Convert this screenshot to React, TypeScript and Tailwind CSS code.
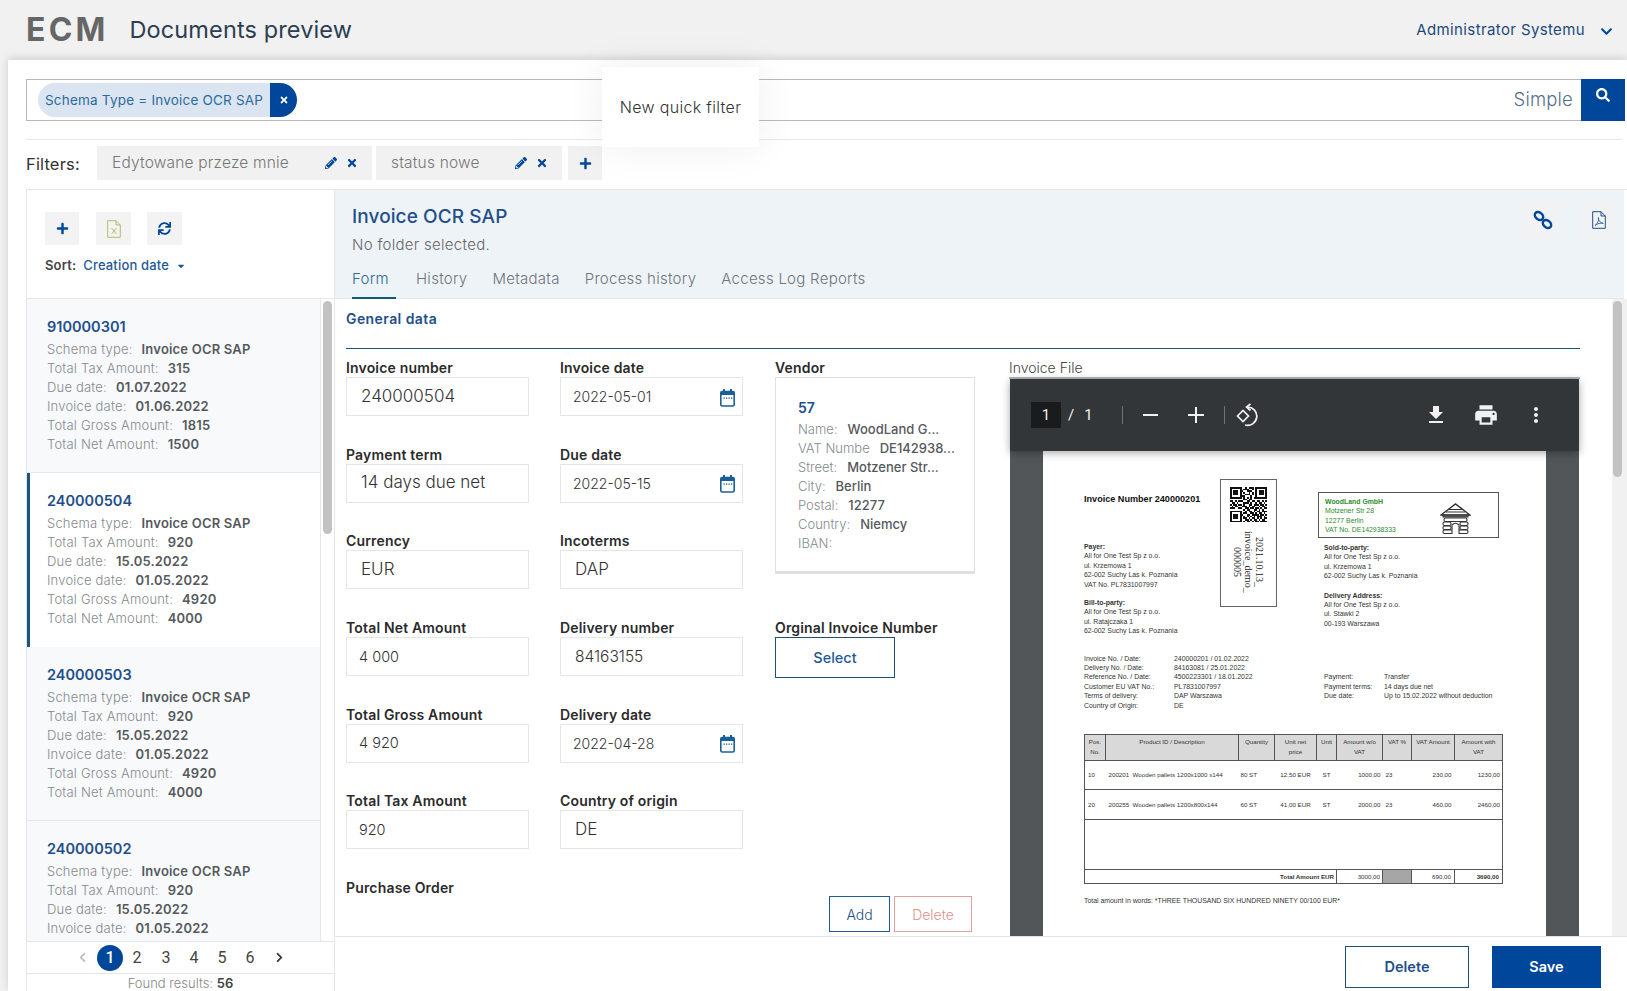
import React from "react";
import { FaPlus, FaTimes, FaSearch, FaChevronDown, FaPencilAlt, FaSync, FaChevronLeft, FaChevronRight, FaCaretDown } from "react-icons/fa";

type Item = { id: string; tax: string; due: string; inv: string; gross?: string; net?: string; active?: boolean };

const items: Item[] = [
  { id: "910000301", tax: "315", due: "01.07.2022", inv: "01.06.2022", gross: "1815", net: "1500" },
  { id: "240000504", tax: "920", due: "15.05.2022", inv: "01.05.2022", gross: "4920", net: "4000", active: true },
  { id: "240000503", tax: "920", due: "15.05.2022", inv: "01.05.2022", gross: "4920", net: "4000" },
  { id: "240000502", tax: "920", due: "15.05.2022", inv: "01.05.2022" },
];

function Row({ k, v }: { k: string; v: string }) {
  return (
    <div className="flex h-[19px] items-center text-[13px] tracking-[0.015em] whitespace-nowrap">
      <span className="text-[#858a8e] font-light">{k}</span>
      <span className="ml-[9px] text-[#55595c] font-semibold">{v}</span>
    </div>
  );
}

function ListItem({ it }: { it: Item }) {
  return (
    <div className={"h-[174px] pt-[18px] shrink-0 " + (it.active ? "bg-white border-l-[3px] border-[#1a5487] pl-[17px]" : "bg-[#f7f9fb] border-b border-[#e6e8ea] pl-[20px]")}>
      <div className="text-[14.5px] leading-[19px] font-semibold text-[#1f4f8b] mb-[4px]">{it.id}</div>
      <Row k="Schema type:" v="Invoice OCR SAP" />
      <Row k="Total Tax Amount:" v={it.tax} />
      <Row k="Due date:" v={it.due} />
      <Row k="Invoice date:" v={it.inv} />
      {it.gross && <Row k="Total Gross Amount:" v={it.gross} />}
      {it.net && <Row k="Total Net Amount:" v={it.net} />}
    </div>
  );
}

function Label({ children }: { children: React.ReactNode }) {
  return <div className="h-[17px] leading-[16px] text-[14px] font-semibold text-[#2b2b2b] tracking-[0.012em] whitespace-nowrap">{children}</div>;
}

function Field({ label, value, date, cls = "pl-[14px] text-[17px]" }: { label: string; value: string; date?: boolean; cls?: string }) {
  return (
    <div>
      <Label>{label}</Label>
      <div className="h-[39px] border border-[#e6e6e6] flex items-center justify-between pr-[7px]">
        <span className={"font-light text-[#333] " + cls}>{value}</span>
        {date && <CalendarIcon />}
      </div>
    </div>
  );
}

function CalendarIcon() {
  return (
    <svg width="15" height="18" viewBox="0 0 15 18" className="mt-[2px]">
      <rect x="3" y="0" width="2" height="4" fill="#1a5f96" />
      <rect x="10" y="0" width="2" height="4" fill="#1a5f96" />
      <rect x="0.8" y="2.5" width="13.4" height="14.5" rx="1.5" fill="#fff" stroke="#1a5f96" strokeWidth="1.6" />
      <rect x="0.8" y="2.5" width="13.4" height="3.5" fill="#1a5f96" />
      <rect x="3.5" y="8.5" width="1.3" height="1.3" fill="#1a5f96" />
      <rect x="6" y="8.5" width="1.3" height="1.3" fill="#1a5f96" />
      <rect x="8.5" y="8.5" width="1.3" height="1.3" fill="#1a5f96" />
      <rect x="11" y="8.5" width="1.3" height="1.3" fill="#1a5f96" />
    </svg>
  );
}

function VRow({ k, v }: { k: string; v?: string }) {
  return (
    <div className="flex h-[19px] items-center text-[13px] whitespace-nowrap">
      <span className="text-[#858a8e] font-light">{k}</span>
      {v && <span className="ml-[10px] text-[#55595c] font-medium">{v}</span>}
    </div>
  );
}

const QR_ROWS = [
  "1111111001011101111111",
  "1000001011100101000001",
  "1011101100111001011101",
  "1011101010010101011101",
  "1011101001110101011101",
  "1000001110001001000001",
  "1111111010101011111111",
  "0000000011011000000000",
  "1101011100110110110101",
  "0110100011101001011010",
  "1011011010011011101101",
  "0101100111010110010110",
  "1110011001101101101011",
  "0000000010110011010100",
  "1111111001011010110111",
  "1000001011001101011010",
  "1011101100110111101101",
  "1011101010101010111010",
  "1011101011010110101011",
  "1000001001101011010110",
  "1111111010110101101111",
  "0000000000000000000000",
];

function QR() {
  return (
    <svg width="37" height="37" viewBox="0 0 22 22" shapeRendering="crispEdges">
      {QR_ROWS.flatMap((r, y) =>
        r.split("").map((c, x) => (c === "1" ? <rect key={x + "-" + y} x={x} y={y} width="1" height="1" fill="#111" /> : null))
      )}
    </svg>
  );
}

function House() {
  return (
    <svg width="31" height="32" viewBox="0 0 31 32" fill="none" stroke="#333" strokeWidth="1.1">
      <path d="M1 12 L15.5 1 L30 12 Z" strokeWidth="1.4" />
      <path d="M6 9 H25 M9 6.5 H22" />
      <path d="M3 12 H28 V14 H3 Z" fill="#666" />
      <rect x="4" y="15" width="23" height="3.5" rx="1.5" />
      <rect x="3" y="19" width="8" height="3.5" rx="1.5" />
      <rect x="20" y="19" width="8" height="3.5" rx="1.5" />
      <rect x="3" y="23" width="8" height="3.5" rx="1.5" />
      <rect x="20" y="23" width="8" height="3.5" rx="1.5" />
      <rect x="3" y="27" width="25" height="3.5" rx="1.5" />
      <path d="M12 31 V22 Q15.5 18.5 19 22 V31" fill="#fff" />
    </svg>
  );
}

function Lines({ lines, boldFirst }: { lines: string[]; boldFirst?: boolean }) {
  return (
    <div className="text-[6.9px] leading-[9.4px] text-[#333] whitespace-nowrap">
      {lines.map((l, i) => (
        <div key={l} className={boldFirst && i === 0 ? "font-bold" : ""}>{l}</div>
      ))}
    </div>
  );
}

function PdfPage() {
  const th = "border border-[#555] bg-[#d9d9d9] align-top text-center font-normal leading-[9.5px] pt-[2px]";
  const td = "border-y border-[#555]";
  return (
    <div className="w-[503px] bg-white pl-[41px] pt-[28px] shrink-0 h-[600px] font-['Liberation_Sans',sans-serif] tracking-normal">
      <div className="flex">
        <div className="w-[136px] shrink-0">
          <div className="mt-[15px] text-[9.1px] leading-[10px] font-bold text-[#111] whitespace-nowrap">Invoice Number 240000201</div>
          <div className="mt-[38px]">
            <Lines boldFirst lines={["Payer:", "All for One Test Sp z o.o.", "ul. Krzemowa 1", "62-002 Suchy Las k. Poznania", "VAT No. PL7831007997"]} />
          </div>
          <div className="mt-[9px]">
            <Lines boldFirst lines={["Bill-to-party:", "All for One Test Sp z o.o.", "ul. Ratajczaka 1", "62-002 Suchy Las k. Poznania"]} />
          </div>
        </div>
        <div className="w-[57px] h-[128px] shrink-0 border border-[#666] flex flex-col items-center pt-[7px]">
          <QR />
          <div className="mt-[5px] [writing-mode:vertical-rl] font-['Liberation_Serif',serif] text-[10px] leading-[11px] text-center text-[#222] h-[66px] whitespace-nowrap">
            <div>2021.10.13_</div>
            <div>invoice_demo_</div>
            <div>000005</div>
          </div>
        </div>
        <div className="ml-[41px] w-[181px] shrink-0 mt-[13px]">
          <div className="h-[46px] border border-[#555] flex pl-[6px] pt-[4px]">
            <div className="w-[115px] text-[6.9px] leading-[9.4px] text-[#2e8b2e] whitespace-nowrap">
              <div className="font-bold">WoodLand GmbH</div>
              <div>Motzener Str 28</div>
              <div>12277 Berlin</div>
              <div>VAT No. DE142938333</div>
            </div>
            <div className="mt-[6px]"><House /></div>
          </div>
          <div className="mt-[5px] pl-[6px]">
            <Lines boldFirst lines={["Sold-to-party:", "All for One Test Sp z o.o.", "ul. Krzemowa 1", "62-002 Suchy Las k. Poznania"]} />
          </div>
          <div className="mt-[10px] pl-[6px]">
            <Lines boldFirst lines={["Delivery Address:", "All for One Test Sp z o.o.", "ul. Stawki 2", "00-193 Warszawa"]} />
          </div>
        </div>
      </div>
      <div className="flex mt-[18px] text-[6.9px] leading-[9.4px] text-[#333] whitespace-nowrap">
        <div className="w-[90px] shrink-0">
          <div>Invoice No. / Date:</div><div>Delivery No. / Date:</div><div>Reference No. / Date:</div><div>Customer EU VAT No.:</div><div>Terms of delivery:</div><div>Country of Origin:</div>
        </div>
        <div className="w-[150px] shrink-0">
          <div>240000201 / 01.02.2022</div><div>84163081 / 25.01.2022</div><div>4500223301 / 18.01.2022</div><div>PL7831007997</div><div>DAP Warszawa</div><div>DE</div>
        </div>
        <div className="w-[60px] shrink-0 pt-[18.8px]">
          <div>Payment:</div><div>Payment terms:</div><div>Due date:</div>
        </div>
        <div className="pt-[18.8px]">
          <div>Transfer</div><div>14 days due net</div><div>Up to 15.02.2022 without deduction</div>
        </div>
      </div>
      <table className="mt-[24px] w-[418px] table-fixed border-collapse text-[6.2px] text-[#333]">
        <colgroup>
          <col className="w-[21px]" /><col className="w-[133px]" /><col className="w-[36px]" /><col className="w-[42px]" /><col className="w-[20px]" /><col className="w-[46px]" /><col className="w-[29px]" /><col className="w-[43px]" /><col className="w-[48px]" />
        </colgroup>
        <tbody>
          <tr className="h-[26px]">
            <td className={th}>Pos.<br />No.</td><td className={th}>Product ID / Description</td><td className={th}>Quantity</td><td className={th}>Unit net<br />price</td><td className={th}>Unit</td><td className={th}>Amount w/o<br />VAT</td><td className={th}>VAT %</td><td className={th}>VAT Amount</td><td className={th}>Amount with<br />VAT</td>
          </tr>
          <tr className="h-[29px]">
            <td className={td + " border-l pl-[3px]"}>10</td><td className={td + " pl-[3px] whitespace-nowrap"}>200201&nbsp; Wooden pallets 1200x1000 x144</td><td className={td + " pl-[2px]"}>80 ST</td><td className={td + " text-center"}>12,50 EUR</td><td className={td + " text-center"}>ST</td><td className={td + " text-right pr-[2px]"}>1000,00</td><td className={td + " pl-[3px]"}>23</td><td className={td + " text-right pr-[3px]"}>230,00</td><td className={td + " border-r text-right pr-[2px]"}>1230,00</td>
          </tr>
          <tr className="h-[30px]">
            <td className={td + " border-l pl-[3px]"}>20</td><td className={td + " pl-[3px] whitespace-nowrap"}>200255&nbsp; Wooden pallets 1200x800x144</td><td className={td + " pl-[2px]"}>60 ST</td><td className={td + " text-center"}>41,00 EUR</td><td className={td + " text-center"}>ST</td><td className={td + " text-right pr-[2px]"}>2000,00</td><td className={td + " pl-[3px]"}>23</td><td className={td + " text-right pr-[3px]"}>460,00</td><td className={td + " border-r text-right pr-[2px]"}>2460,00</td>
          </tr>
          <tr className="h-[50px]"><td colSpan={9} className="border-x border-[#555]"></td></tr>
          <tr className="h-[14px]">
            <td colSpan={5} className="border border-[#555] text-right pr-[2px] font-bold">Total Amount EUR</td>
            <td className="border border-[#555] text-right pr-[2px]">3000,00</td>
            <td className="border border-[#555] bg-[#a6a6a6]"></td>
            <td className="border border-[#555] text-right pr-[3px]">690,00</td>
            <td className="border border-[#555] text-right pr-[3px] font-bold">3690,00</td>
          </tr>
        </tbody>
      </table>
      <div className="mt-[12px] text-[6.9px] leading-[10px] text-[#333] whitespace-nowrap">Total amount in words: *THREE THOUSAND SIX HUNDRED NINETY 00/100 EUR*</div>
    </div>
  );
}

function PdfViewer() {
  return (
    <div className="w-[569px] ml-[1px] shrink-0 bg-[#525659]">
      <div className="h-[72px] bg-[#323639] flex items-center pl-[21px] shadow-[0_2px_8px_rgba(0,0,0,0.35)] relative text-[#f1f1f1] font-['Roboto',sans-serif]">
        <div className="w-[30px] h-[26px] bg-[#191b1c] flex items-center justify-center text-[15px]">1</div>
        <span className="ml-[7px] text-[15px]">/</span>
        <span className="ml-[10px] text-[15px]">1</span>
        <div className="ml-[29px] w-px h-[18px] bg-[#6f7173]" />
        <svg className="ml-[20px]" width="15" height="16" viewBox="0 0 15 16"><rect y="7" width="15" height="2" fill="#f1f1f1" /></svg>
        <svg className="ml-[30px]" width="16" height="16" viewBox="0 0 16 16"><path d="M0 7h7V0h2v7h7v2H9v7H7V9H0z" fill="#f1f1f1" /></svg>
        <div className="ml-[20px] w-px h-[18px] bg-[#6f7173]" />
        <svg className="ml-[11px]" width="24" height="24" viewBox="0 0 24 24" fill="none" stroke="#f1f1f1" strokeWidth="1.7">
          <path d="M1.5 13 L7 7.5 L12.5 13 L7 18.5 Z" />
          <path d="M11 4 A9.2 9.2 0 1 1 9 22" />
          <path d="M14.5 0.8 L10.5 4 L14.5 7.5" />
        </svg>
        <svg className="ml-[164px]" width="24" height="24" viewBox="0 0 24 24" fill="#f1f1f1"><path d="M19 9h-4V3H9v6H5l7 7 7-7zM5 18v2h14v-2H5z" /></svg>
        <svg className="ml-[25px]" width="26" height="26" viewBox="0 0 24 24" fill="#f1f1f1"><path d="M19 8H5c-1.66 0-3 1.34-3 3v6h4v4h12v-4h4v-6c0-1.66-1.34-3-3-3zm-3 11H8v-5h8v5zm3-7c-.55 0-1-.45-1-1s.45-1 1-1 1 .45 1 1-.45 1-1 1zm-1-9H6v4h12V3z" /></svg>
        <svg className="ml-[25px]" width="24" height="24" viewBox="0 0 24 24" fill="#f1f1f1"><path d="M12 8c1.1 0 2-.9 2-2s-.9-2-2-2-2 .9-2 2 .9 2 2 2zm0 2c-1.1 0-2 .9-2 2s.9 2 2 2 2-.9 2-2-.9-2-2-2zm0 6c-1.1 0-2 .9-2 2s.9 2 2 2 2-.9 2-2-.9-2-2-2z" /></svg>
      </div>
      <div className="pl-[33px]"><PdfPage /></div>
    </div>
  );
}

function LinkIcon() {
  return (
    <svg width="20" height="20" viewBox="0 0 20 20" fill="none" stroke="#00479b" strokeWidth="2.5">
      <ellipse cx="6" cy="6" rx="3.4" ry="4.6" transform="rotate(-50 6 6)" />
      <ellipse cx="14" cy="14" rx="3.4" ry="4.6" transform="rotate(-50 14 14)" />
    </svg>
  );
}

function DocBase({ color, children }: { color: string; children: React.ReactNode }) {
  return (
    <svg width="14" height="18" viewBox="0 0 14 18" fill="none" stroke={color} strokeWidth="1">
      <path d="M0.7 0.7 H9 L13.3 5 V17.3 H0.7 Z" />
      <path d="M9 0.7 V5 H13.3" />
      {children}
    </svg>
  );
}

function ChipIcons() {
  return (
    <>
      <FaPencilAlt size={12} className="ml-auto text-[#00479b]" />
      <FaTimes size={12} className="ml-[9px] mr-[14px] text-[#00479b]" />
    </>
  );
}

export default function App() {
  return (
    <div className="h-[991px] w-full overflow-hidden bg-[#f1f1f1] flex flex-col font-['Inter',sans-serif] text-[#333]">
      {/* Top bar */}
      <header className="h-[60px] shrink-0 flex items-center pl-[26px] pr-[14px]">
        <span className="text-[32px] font-bold text-[#666] tracking-[0.1em]">ECM</span>
        <span className="ml-[21px] text-[23.5px] text-[#2c3e50] tracking-[0.005em]">Documents preview</span>
        <span className="ml-auto text-[15px] text-[#1d4a7a] tracking-[0.025em]">Administrator Systemu</span>
        <FaChevronDown className="ml-[15px] text-[#00479b] mt-[3px]" size={13} />
      </header>

      {/* Sheet */}
      <main className="relative flex-1 min-h-0 ml-[8px] pl-[18px] bg-white flex flex-col shadow-[0_-2px_8px_rgba(0,0,0,0.14)]">
        {/* Search */}
        <div className="mt-[19px] mr-[2px] h-[42px] shrink-0 border border-[#b9b9b9] border-r-0 flex items-center pl-[11px]">
          <div className="h-[34px] flex items-center bg-[#dbe5f1] rounded-full overflow-hidden pl-[7px]">
            <span className="text-[13.5px] text-[#2b6a9b] pr-[7px] tracking-[0.015em] whitespace-nowrap">Schema Type = Invoice OCR SAP</span>
            <span className="w-[27px] h-[34px] bg-[#00479b] text-white flex items-center justify-center"><FaTimes size={10} /></span>
          </div>
          <span className="ml-auto text-[18.5px] font-light text-[#55708a] mr-[8px] tracking-[0.01em]">Simple</span>
          <div className="w-[44px] h-[42px] -my-px bg-[#00479b] text-white flex justify-center pt-[9px]"><FaSearch size={14} /></div>
        </div>

        <div className="mt-[18px] mr-[5px] border-t border-[#e9e9e9] shrink-0" />

        {/* Filters */}
        <div className="mt-[6px] h-[34px] shrink-0 flex items-center">
          <span className="w-[71px] text-[#333] text-[16.5px] tracking-[0.01em] pt-[2px]">Filters:</span>
          <div className="w-[275px] h-[34px] bg-[#f1f1f1] flex items-center pl-[15px] text-[#777] text-[15.5px] font-light tracking-[0.012em]">
            <span>Edytowane przeze mnie</span>
            <ChipIcons />
          </div>
          <div className="ml-[4px] w-[186px] h-[34px] bg-[#f1f1f1] flex items-center pl-[15px] text-[#777] text-[15.5px] font-light tracking-[0.012em]">
            <span>status nowe</span>
            <ChipIcons />
          </div>
          <div className="ml-[6px] w-[34px] h-[34px] bg-[#f1f1f1] flex items-center justify-center text-[#00479b]"><FaPlus size={13} /></div>
        </div>

        {/* Panel */}
        <div className="mt-[9px] flex-1 min-h-0 flex border-t border-[#e6e6e6]">
          {/* Left */}
          <aside className="w-[309px] shrink-0 border-l border-r border-[#e6e6e6] flex flex-col">
            <div className="h-[109px] shrink-0 pl-[18px] pt-[22px] border-b border-[#e6e6e6]">
              <div className="flex">
                <div className="w-[34px] h-[33px] bg-[#f3f3f3] flex items-center justify-center text-[#00479b]"><FaPlus size={13} /></div>
                <div className="ml-[17px] w-[35px] h-[33px] bg-[#f3f3f3] flex items-center justify-center">
                  <DocBase color="#b5bd6a">
                    <path d="M4.5 8 L9.5 14 M9.5 8 L4.5 14" />
                  </DocBase>
                </div>
                <div className="ml-[16px] w-[35px] h-[33px] bg-[#f3f3f3] flex items-center justify-center text-[#00479b]"><FaSync size={13} /></div>
              </div>
              <div className="mt-[11px] flex items-center text-[13px] h-[20px] tracking-[0.012em]">
                <span className="font-semibold text-[#444]">Sort:</span>
                <span className="ml-[7px] font-medium text-[#1f5a96]">Creation date</span>
                <FaCaretDown size={10} className="ml-[7px] text-[#1f5a96]" />
              </div>
            </div>
            <div className="flex-1 min-h-0 flex">
              <div className="w-[294px] flex flex-col overflow-hidden border-r border-[#e6e6e6]">
                {items.map((it) => <ListItem key={it.id} it={it} />)}
              </div>
              <div className="flex-1 pl-[2px] pt-[2px]"><div className="w-[9px] h-[233px] rounded-[5px] bg-[#c2c2c2]" /></div>
            </div>
            <div className="h-[33px] shrink-0 border-t border-b border-[#e6e6e6] flex items-center font-['Roboto',sans-serif] text-[#444] text-[16px]">
              <FaChevronLeft size={11} className="ml-[50px] text-[#bbb]" />
              <span className="ml-[9px] w-[26px] h-[26px] rounded-full bg-[#00479b] text-white flex items-center justify-center font-medium">1</span>
              <span className="ml-[5px] w-[18px] text-center">2</span>
              <span className="ml-[11px] w-[18px] text-center">3</span>
              <span className="ml-[10px] w-[18px] text-center">4</span>
              <span className="ml-[10px] w-[18px] text-center">5</span>
              <span className="ml-[10px] w-[18px] text-center">6</span>
              <FaChevronRight size={11} className="ml-[15px] text-[#333]" />
            </div>
            <div className="h-[17px] shrink-0 text-center text-[13px] leading-[18px] text-[#888] font-light">Found results: <b className="font-semibold text-[#444]">56</b></div>
          </aside>

          {/* Right */}
          <section className="flex-1 min-w-0 flex flex-col">
            <div className="h-[109px] shrink-0 mr-[3px] bg-[#eef3f8] pl-[17px] flex border-b border-[#e6e6e6]">
              <div className="flex-1">
                <div className="mt-[15px] text-[19px] leading-[24px] text-[#1f4f8b] font-medium tracking-[0.005em]">Invoice OCR SAP</div>
                <div className="mt-[6px] text-[15px] leading-[20px] text-[#666] font-light tracking-[0.02em]">No folder selected.</div>
                <div className="mt-[14px] h-[30px] flex text-[15px] font-light text-[#6f757b] tracking-[0.018em] whitespace-nowrap">
                  <span className="w-[44px] border-b-[2px] border-[#0b5a7a] text-[#2a6a8f] leading-[20px]">Form</span>
                  <span className="ml-[20px] leading-[20px]">History</span>
                  <span className="ml-[25px] leading-[20px]">Metadata</span>
                  <span className="ml-[25px] leading-[20px]">Process history</span>
                  <span className="ml-[25px] leading-[20px]">Access Log Reports</span>
                </div>
              </div>
              <div className="flex mt-[10px] pr-[7px]">
                <div className="w-[40px] h-[40px] bg-[#f0f2f4] flex items-center justify-center"><LinkIcon /></div>
                <div className="ml-[17px] w-[37px] h-[40px] bg-[#f0f2f4] flex items-center justify-center">
                  <DocBase color="#1f4f8b">
                    <path d="M3 14.5 C6 12.5 7.2 8.5 6.4 6.5 C6 8.5 8 12 11.3 12.3 C8.5 11.8 5 12.6 3 14.5 Z" strokeWidth="0.8" />
                  </DocBase>
                </div>
              </div>
            </div>

            <div className="flex-1 min-h-0 flex">
              <div className="flex-1 min-w-0 overflow-hidden pl-[11px]">
                <div className="mt-[12px] h-[16px] leading-[16px] text-[14px] font-semibold text-[#1f4f8b] tracking-[0.03em]">General data</div>
                <div className="mt-[21px] w-[1234px] border-t border-[#1f4e79]" />
                <div className="mt-[11px] flex">
                  <div className="w-[630px] shrink-0">
                    <div className="grid grid-cols-[183px_183px_201px] gap-x-[31px] gap-y-[30.7px]">
                      <Field label="Invoice number" value="240000504" />
                      <Field label="Invoice date" value="2022-05-01" date cls="pl-[12px] text-[14px]" />
                      <div className="row-span-3 ml-[1px]">
                        <Label>Vendor</Label>
                        <div className="h-[197px] border border-[#e0e0e0] border-b-[3px] pl-[22px] pt-[20px]">
                          <div className="text-[14px] leading-[19px] font-semibold text-[#1f4f8b] mb-[3px]">57</div>
                          <VRow k="Name:" v="WoodLand G..." />
                          <VRow k="VAT Numbe" v="DE142938..." />
                          <VRow k="Street:" v="Motzener Str..." />
                          <VRow k="City:" v="Berlin" />
                          <VRow k="Postal:" v="12277" />
                          <VRow k="Country:" v="Niemcy" />
                          <VRow k="IBAN:" />
                        </div>
                      </div>
                      <Field label="Payment term" value="14 days due net" />
                      <Field label="Due date" value="2022-05-15" date cls="pl-[12px] text-[14px]" />
                      <Field label="Currency" value="EUR" />
                      <Field label="Incoterms" value="DAP" />
                      <Field label="Total Net Amount" value="4 000" cls="pl-[12px] text-[14.5px]" />
                      <Field label="Delivery number" value="84163155" cls="pl-[14px] text-[15.5px]" />
                      <div className="h-[56px] ml-[1px]">
                        <Label>Orginal Invoice Number</Label>
                        <div className="w-[120px] h-[41px] border border-[#1f4e79] flex items-center justify-center text-[14.5px] font-medium text-[#1f5a96]">Select</div>
                      </div>
                      <Field label="Total Gross Amount" value="4 920" cls="pl-[12px] text-[14.5px]" />
                      <Field label="Delivery date" value="2022-04-28" date cls="pl-[12px] text-[14px]" />
                      <div />
                      <Field label="Total Tax Amount" value="920" cls="pl-[12px] text-[14.5px]" />
                      <Field label="Country of origin" value="DE" />
                    </div>
                    <div className="mt-[31px]"><Label>Purchase Order</Label></div>
                    <div className="-mt-[1px] flex justify-end pr-[4px] text-[14px] font-light">
                      <div className="w-[61px] h-[36px] border border-[#1f5a96] flex items-center justify-center text-[#1f4f8b]">Add</div>
                      <div className="ml-[4px] w-[78px] h-[36px] border border-[#e0a0a0] flex items-center justify-center text-[#e08f8f]">Delete</div>
                    </div>
                  </div>
                  <div className="ml-[33px] w-[571px] shrink-0">
                    <div className="h-[17px] leading-[16px] text-[14px] font-light text-[#444]">Invoice File</div>
                    <div className="h-[2px] bg-[#b5b5b5]" />
                    <PdfViewer />
                  </div>
                </div>
              </div>
              <div className="w-[15px] shrink-0 bg-[#f1f1f1] pl-[1px] pt-[2px]"><div className="w-[9px] h-[176px] rounded-[5px] bg-[#c2c2c2]" /></div>
            </div>

            <div className="h-[55px] shrink-0 border-t border-[#e6e6e6] bg-white flex justify-end pt-[9px] pr-[26px] text-[14.5px] font-semibold">
              <div className="w-[124px] h-[42px] border border-[#1f4e79] flex items-center justify-center text-[#1f4f8b]">Delete</div>
              <div className="ml-[23px] w-[109px] h-[42px] bg-[#00479b] flex items-center justify-center text-white">Save</div>
            </div>
          </section>
        </div>

        {/* Quick filter popup */}
        <div className="absolute left-[594px] top-[7px] w-[157px] h-[80px] bg-white flex items-center justify-center text-[16px] font-light tracking-[0.02em] text-[#333] whitespace-nowrap shadow-[0_0_40px_rgba(0,0,0,0.07)]">
          New quick filter
        </div>
      </main>
    </div>
  );
}
